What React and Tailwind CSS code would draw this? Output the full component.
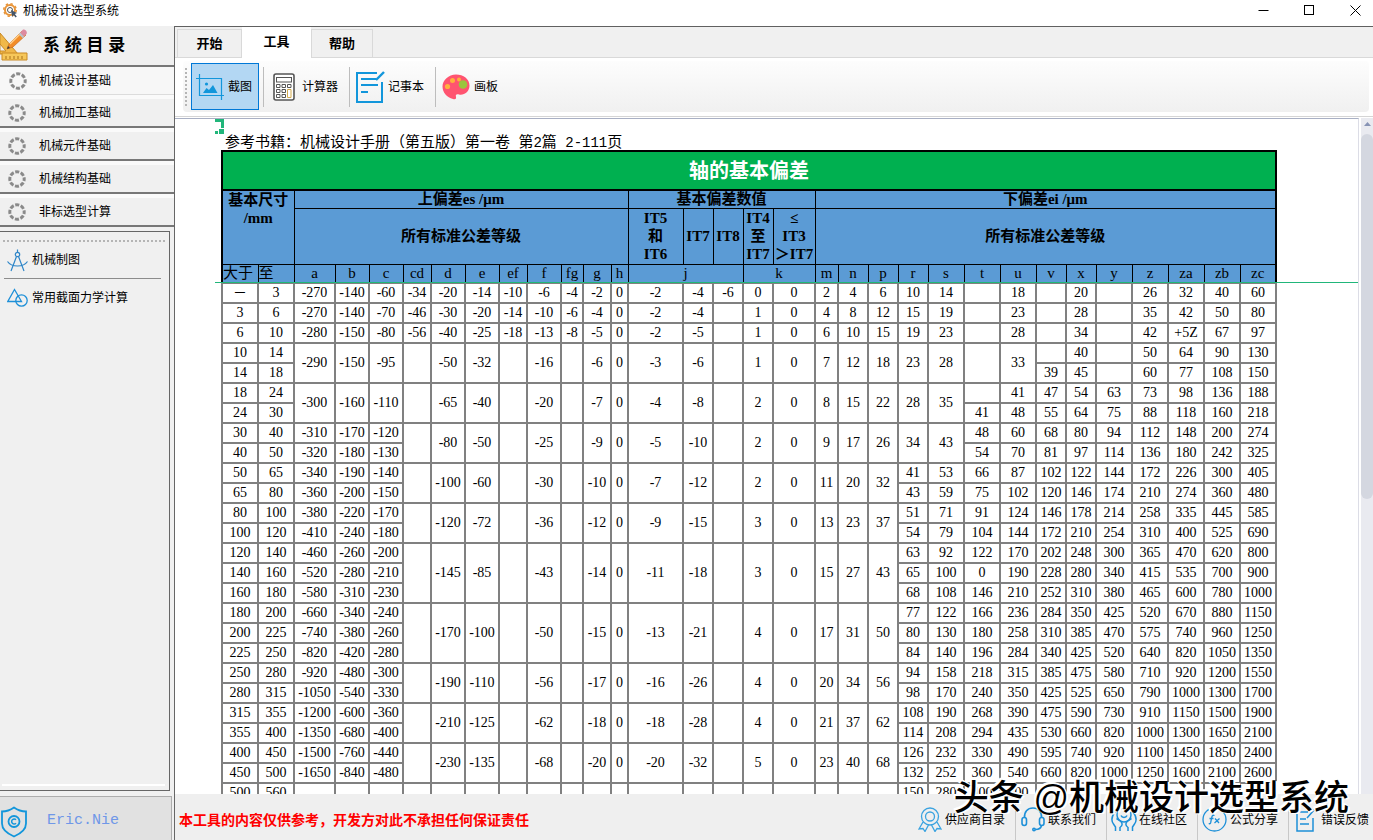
import { useState } from "react";

const COLUMNS = [
    { name: "大于", width: "w-[36px]" },
    { name: "至", width: "w-[36px]" },
    { name: "a", width: "w-[41px]" },
    { name: "b", width: "w-[34px]" },
    { name: "c", width: "w-[34px]" },
    { name: "cd", width: "w-[28px]" },
    { name: "d", width: "w-[34px]" },
    { name: "e", width: "w-[34px]" },
    { name: "ef", width: "w-[28px]" },
    { name: "f", width: "w-[34px]" },
    { name: "fg", width: "w-[22px]" },
    { name: "g", width: "w-[28px]" },
    { name: "h", width: "w-[17px]" },
    { name: "j", width: "w-[55px]", span: 3 },
    { width: "w-[30px]" },
    { width: "w-[30px]" },
    { name: "k", width: "w-[30px]", span: 2 },
    { width: "w-[42px]" },
    { name: "m", width: "w-[23px]" },
    { name: "n", width: "w-[30px]" },
    { name: "p", width: "w-[30px]" },
    { name: "r", width: "w-[30px]" },
    { name: "s", width: "w-[36px]" },
    { name: "t", width: "w-[36px]" },
    { name: "u", width: "w-[36px]" },
    { name: "v", width: "w-[30px]" },
    { name: "x", width: "w-[30px]" },
    { name: "y", width: "w-[36px]" },
    { name: "z", width: "w-[36px]" },
    { name: "za", width: "w-[36px]" },
    { name: "zb", width: "w-[36px]" },
    { name: "zc", width: "w-[36px]" },
];

// "^" joins the cell with the one above it
const ROWS = [
    "─,3,-270,-140,-60,-34,-20,-14,-10,-6,-4,-2,0,-2,-4,-6,0,0,2,4,6,10,14,,18,,20,,26,32,40,60",
    "3,6,-270,-140,-70,-46,-30,-20,-14,-10,-6,-4,0,-2,-4,,1,0,4,8,12,15,19,,23,,28,,35,42,50,80",
    "6,10,-280,-150,-80,-56,-40,-25,-18,-13,-8,-5,0,-2,-5,,1,0,6,10,15,19,23,,28,,34,,42,+5Z,67,97",
    "10,14,-290,-150,-95,,-50,-32,,-16,,-6,0,-3,-6,,1,0,7,12,18,23,28,,33,,40,,50,64,90,130",
    "14,18,^,^,^,^,^,^,^,^,^,^,^,^,^,^,^,^,^,^,^,^,^,^,^,39,45,,60,77,108,150",
    "18,24,-300,-160,-110,,-65,-40,,-20,,-7,0,-4,-8,,2,0,8,15,22,28,35,,41,47,54,63,73,98,136,188",
    "24,30,^,^,^,^,^,^,^,^,^,^,^,^,^,^,^,^,^,^,^,^,^,41,48,55,64,75,88,118,160,218",
    "30,40,-310,-170,-120,,-80,-50,,-25,,-9,0,-5,-10,,2,0,9,17,26,34,43,48,60,68,80,94,112,148,200,274",
    "40,50,-320,-180,-130,^,^,^,^,^,^,^,^,^,^,^,^,^,^,^,^,^,^,54,70,81,97,114,136,180,242,325",
    "50,65,-340,-190,-140,,-100,-60,,-30,,-10,0,-7,-12,,2,0,11,20,32,41,53,66,87,102,122,144,172,226,300,405",
    "65,80,-360,-200,-150,^,^,^,^,^,^,^,^,^,^,^,^,^,^,^,^,43,59,75,102,120,146,174,210,274,360,480",
    "80,100,-380,-220,-170,,-120,-72,,-36,,-12,0,-9,-15,,3,0,13,23,37,51,71,91,124,146,178,214,258,335,445,585",
    "100,120,-410,-240,-180,^,^,^,^,^,^,^,^,^,^,^,^,^,^,^,^,54,79,104,144,172,210,254,310,400,525,690",
    "120,140,-460,-260,-200,,-145,-85,,-43,,-14,0,-11,-18,,3,0,15,27,43,63,92,122,170,202,248,300,365,470,620,800",
    "140,160,-520,-280,-210,^,^,^,^,^,^,^,^,^,^,^,^,^,^,^,^,65,100,0,190,228,280,340,415,535,700,900",
    "160,180,-580,-310,-230,^,^,^,^,^,^,^,^,^,^,^,^,^,^,^,^,68,108,146,210,252,310,380,465,600,780,1000",
    "180,200,-660,-340,-240,,-170,-100,,-50,,-15,0,-13,-21,,4,0,17,31,50,77,122,166,236,284,350,425,520,670,880,1150",
    "200,225,-740,-380,-260,^,^,^,^,^,^,^,^,^,^,^,^,^,^,^,^,80,130,180,258,310,385,470,575,740,960,1250",
    "225,250,-820,-420,-280,^,^,^,^,^,^,^,^,^,^,^,^,^,^,^,^,84,140,196,284,340,425,520,640,820,1050,1350",
    "250,280,-920,-480,-300,,-190,-110,,-56,,-17,0,-16,-26,,4,0,20,34,56,94,158,218,315,385,475,580,710,920,1200,1550",
    "280,315,-1050,-540,-330,^,^,^,^,^,^,^,^,^,^,^,^,^,^,^,^,98,170,240,350,425,525,650,790,1000,1300,1700",
    "315,355,-1200,-600,-360,,-210,-125,,-62,,-18,0,-18,-28,,4,0,21,37,62,108,190,268,390,475,590,730,910,1150,1500,1900",
    "355,400,-1350,-680,-400,^,^,^,^,^,^,^,^,^,^,^,^,^,^,^,^,114,208,294,435,530,660,820,1000,1300,1650,2100",
    "400,450,-1500,-760,-440,,-230,-135,,-68,,-20,0,-20,-32,,5,0,23,40,68,126,232,330,490,595,740,920,1100,1450,1850,2400",
    "450,500,-1650,-840,-480,^,^,^,^,^,^,^,^,^,^,^,^,^,^,^,^,132,252,360,540,660,820,1000,1250,1600,2100,2600",
    "500,560,,,,,,,,,,,,,,,,,,,,150,280,400,600,,,,,,,",
].map((row) => row.split(","));

const CHAPTERS = [
    "机械设计基础",
    "机械加工基础",
    "机械元件基础",
    "机械结构基础",
    "非标选型计算",
];

const TABS = ["开始", "工具", "帮助"];

function rowSpan(row, col) {
    let span = 1;
    while (ROWS[row + span] && ROWS[row + span][col] === "^") span++;
    return span;
}

function AppIcon() {
    return (
        <svg width="16" height="16" viewBox="0 0 16 16" fill="none">
            <circle cx="7" cy="7" r="5" stroke="#e8953a" strokeWidth="2" />
            <circle cx="7" cy="7" r="6.3" stroke="#e8953a" strokeWidth="1.4" strokeDasharray="2.4 2.5" />
            <circle cx="7" cy="7" r="2.5" stroke="#555" />
            <path d="M8 7l6 3-2.2 1 2 2.6-1.2 1-2-2.6-1.4 2z" fill="#44566b" />
        </svg>
    );
}

function DrawingTools() {
    return (
        <svg width="28" height="34" viewBox="0 0 28 34">
            <path d="M0 4L18 25H0z" fill="#f0b84a" stroke="#c98a25" />
            <path d="M0 15l6 7H0z" fill="#f0f0f0" stroke="#c98a25" />
            <path d="M2 24h25v7H2z" fill="#f6c75a" stroke="#c98a25" />
            <path d="M6 27v3M10 27v3M14 27v3M18 27v3M22 27v3" stroke="#a8701a" />
            <path d="M7 20l2-5 13-13 4 4-13 12z" fill="#f28c28" stroke="#c0621a" strokeWidth="0.6" />
            <path d="M10 15L21 4" stroke="#ffd08a" strokeWidth="1.4" />
            <path d="M20 4l2.500-3c2-1.500 5.500 1.500 4 4l-2.500 2.500z" fill="#dd8aa0" />
            <path d="M19.500 4.500l4 4" stroke="#b8c4d0" strokeWidth="2" />
            <path d="M7 20l1-3 2 2z" fill="#3d3d3d" />
        </svg>
    );
}

function Ring() {
    return (
        <svg width="18" height="18" viewBox="0 0 18 18" fill="none">
            <circle cx="9" cy="9" r="7.200" stroke="#8a8a8a" strokeWidth="3" strokeDasharray="4.100 1.555" strokeDashoffset="2.050" />
        </svg>
    );
}

function CompassIcon() {
    return (
        <svg width="21" height="23" viewBox="0 0 21 23" fill="none" stroke="#2f86c8" strokeWidth="1.200">
            <path d="M10.500 0.500v3M9.500 7.500L4 22M11.500 7.500L17 22" />
            <circle cx="10.500" cy="5.500" r="2.200" />
            <path d="M0.500 12.500c4 6 16 6 20 0" />
        </svg>
    );
}

function ShapesIcon() {
    return (
        <svg width="21" height="20" viewBox="0 0 21 20" fill="none" stroke="#1e90d8" strokeWidth="1.300">
            <path d="M7.500 1.500L14.500 13.500H0.800z" />
            <circle cx="14.500" cy="12.500" r="5.700" />
        </svg>
    );
}

function CropIcon() {
    return (
        <svg width="28" height="26" viewBox="0 0 28 26" fill="none" stroke="#1296db">
            <path d="M3.500 0v21.500H28M0 4.500h25.500V26" strokeWidth="1.200" />
            <circle cx="10.500" cy="10" r="1.600" fill="#1296db" stroke="none" />
            <path d="M7 19l3.500-5 2.500 2 4-5 4.500 8z" fill="#1296db" stroke="none" />
        </svg>
    );
}

function CalculatorIcon() {
    return (
        <svg width="22" height="28" viewBox="0 0 22 28" fill="#fff" stroke="#555">
            <rect x="1" y="1" width="20" height="26" rx="2" strokeWidth="1.600" />
            <rect x="3.500" y="4.500" width="15" height="4.500" />
            <path d="M3.500 11.500h3.500v3H3.500zM9 11.500h3.500v3H9zM14.500 11.500h3.500v3h-3.500zM3.500 16.500h3.500v3H3.500zM9 16.500h3.500v3H9zM3.500 21.500h3.500v3H3.500zM9 21.500h3.500v3H9z" />
            <path d="M14.500 16.500h3.500v8h-3.500z" stroke="#d3ab4e" />
        </svg>
    );
}

function NoteIcon() {
    return (
        <svg width="29" height="32" viewBox="0 0 29 32" fill="none" stroke="#1296db" strokeWidth="2">
            <path d="M21 2H1v29h25V11" />
            <path d="M5 8h15M5 14h17M5 21h7" strokeWidth="1.800" />
            <path d="M20 9l8-8" strokeWidth="2.400" />
        </svg>
    );
}

function PaletteIcon() {
    return (
        <svg width="28" height="26" viewBox="0 0 28 26">
            <path d="M14 0.500c7.500 0 13.500 4.500 13.500 11S22 21.500 17 20.500c-3-.6-3.500.5-3 2.500.4 1.800-.8 2.800-3 2C5 23.500.5 18.500.5 12.500S6.500.5 14 .5z" fill="#ff5470" />
            <circle cx="5.500" cy="12.500" r="2.600" fill="#ffb13d" />
            <circle cx="10.500" cy="6.500" r="2.500" fill="#ffb13d" />
            <circle cx="17" cy="5.500" r="2" fill="#ffb13d" />
            <circle cx="21" cy="10.500" r="4.300" fill="#9bc53d" />
        </svg>
    );
}

function ShieldIcon() {
    return (
        <svg width="28" height="32" viewBox="0 0 28 32" fill="none" stroke="#1296db" strokeWidth="1.800">
            <path d="M14 1.500c3.500 2.500 7.500 4 12 4v12c0 6-5 10-12 13C7 27.500 2 23.500 2 17.500v-12c4.500 0 8.500-1.500 12-4z" />
            <circle cx="14" cy="15.500" r="5.500" />
            <path d="M16 13.800a2.500 2.500 0 1 0 0 3.400" strokeWidth="1.500" />
        </svg>
    );
}

function MedalIcon() {
    return (
        <svg width="24" height="25" viewBox="0 0 24 25" fill="none" stroke="#3ba3e0" strokeWidth="1.300">
            <circle cx="12" cy="9.500" r="8.500" />
            <circle cx="12" cy="9.500" r="4.500" />
            <path d="M5 15L1 22l4-.5 2 3 3.500-6.500M19 15l4 7-4-.5-2 3-3.500-6.500" />
        </svg>
    );
}

function HeadsetIcon() {
    return (
        <svg width="24" height="25" viewBox="0 0 24 25" fill="none" stroke="#1e90d8" strokeWidth="1.600">
            <path d="M3.500 11C3 5 6.500 1 12 1s9 4 8.500 10" />
            <rect x="1" y="10.500" width="4.500" height="8" rx="2.200" />
            <rect x="18.500" y="10.500" width="4.500" height="8" rx="2.200" />
            <path d="M20.500 18.500c-.5 2.500-3 4-6 4" />
            <circle cx="13" cy="22.500" r="1.200" />
        </svg>
    );
}

function HandsIcon() {
    return (
        <svg width="26" height="25" viewBox="0 0 26 25" fill="none" stroke="#1e90d8" strokeWidth="1.500">
            <circle cx="13" cy="8" r="7" />
            <path d="M10 8.500c1 2.500 5 2.500 6 0" />
            <path d="M4 4.500C1 9 0 14 2.500 17l2 3v4M9 24v-3.500c3-2 2.500-4.500.5-6.500l-4-2.500M22 4.500c3 4.500 4 9.500 1.500 12.500l-2 3v4M17 24v-3.500c-3-2-2.500-4.500-.5-6.500l4-2.500" />
        </svg>
    );
}

function FormulaIcon() {
    return (
        <svg width="25" height="25" viewBox="0 0 25 25" fill="none" stroke="#1e90d8" strokeWidth="1.300">
            <circle cx="12.500" cy="12.500" r="11.500" />
            <path d="M12.500 8.500c-2-.8-2.600.5-3 3l-.8 4c-.3 1.200-1 1.500-2 1M7.500 11.500h4M13 11.500l4 4.500M17.500 11.500L12.500 16" />
        </svg>
    );
}

function FeedbackIcon() {
    return (
        <svg width="20" height="24" viewBox="0 0 20 24" fill="none" stroke="#1e90d8" strokeWidth="1.500">
            <path d="M12 4H1v19h16V10" />
            <path d="M4 11h6M4 16h9M11 10l7.500-8.500" />
        </svg>
    );
}

const TOOLS = [
    { name: "截图", Icon: CropIcon },
    { name: "计算器", Icon: CalculatorIcon },
    { name: "记事本", Icon: NoteIcon },
    { name: "画板", Icon: PaletteIcon },
];

const LINKS = [
    { name: "供应商目录", Icon: MedalIcon },
    { name: "联系我们", Icon: HeadsetIcon },
    { name: "在线社区", Icon: HandsIcon },
    { name: "公式分享", Icon: FormulaIcon },
    { name: "错误反馈", Icon: FeedbackIcon },
];

function TitleBar() {
    return (
        <header className="flex h-[26px] shrink-0 items-center justify-between bg-white pl-[3px] pr-[12px] pb-[5px]">
            <div className="flex items-center gap-1">
                <AppIcon />
                <h1 className="text-xs">机械设计选型系统</h1>
            </div>
            <div className="flex items-center gap-[35px]">
                <button aria-label="最小化" className="size-[11px]">
                    <svg width="11" height="11" viewBox="0 0 11 11" stroke="#000">
                        <path d="M0.500 5.500h10" />
                    </svg>
                </button>
                <button aria-label="最大化" className="size-[11px]">
                    <svg width="11" height="11" viewBox="0 0 11 11" fill="none" stroke="#000">
                        <rect x="0.500" y="0.500" width="9" height="9" />
                    </svg>
                </button>
                <button aria-label="关闭" className="size-[11px]">
                    <svg width="11" height="11" viewBox="0 0 11 11" stroke="#000">
                        <path d="M0.500 0.500l10 10M10.500 0.500l-10 10" />
                    </svg>
                </button>
            </div>
        </header>
    );
}

function Sidebar() {
    return (
        <aside className="flex w-[175px] shrink-0 flex-col border-r border-[#666] bg-[#f0f0f0]">
            <div className="flex h-[41px] shrink-0 items-center gap-[15px] border-b-2 border-[#777]">
                <DrawingTools />
                <h2 className="text-[17px] font-bold">系 统 目 录</h2>
            </div>
            <nav className="flex shrink-0 flex-col text-xs">
                {CHAPTERS.map((chapter, i) => (
                    <button
                        key={chapter}
                        className={
                            i === 0
                                ? "flex h-[28px] items-center gap-[12px] border-b border-[#dcdcdc] bg-[#f7f7f7] pl-[9px]"
                                : "flex h-[33px] items-center gap-[13px] border-t-4 border-b-2 border-t-[#fafafa] border-b-[#777] pt-px pl-2"
                        }
                    >
                        <Ring />
                        <span>{chapter}</span>
                    </button>
                ))}
            </nav>
            <div className="mt-1 mr-1 flex min-h-0 flex-1 flex-col border-t border-r border-b border-[#666] pb-1 text-xs">
                <div className="mt-2 mr-1 ml-[3px] shrink-0 border-t-2 border-dotted border-[#b5b5b5]" />
                <button className="mr-2 ml-1 flex h-[37px] items-center gap-1 border-b border-[#8c8c8c] pl-[3px]">
                    <CompassIcon />
                    <span>机械制图</span>
                </button>
                <button className="mr-2 ml-1 flex h-[37px] items-center gap-1 pl-[3px]">
                    <ShapesIcon />
                    <span>常用截面力学计算</span>
                </button>
                <div className="mt-auto mr-1 ml-[2px] h-[2px] bg-white" />
            </div>
            <button className="mt-[5px] mr-[2px] flex h-[44px] shrink-0 items-center gap-[19px] border-t border-r border-[#adadad] bg-[#e1e1e1] pt-[6px] text-left">
                <ShieldIcon />
                <span className="font-['Liberation_Mono',monospace] text-[15px] text-[#6f97e8]">Eric.Nie</span>
            </button>
        </aside>
    );
}

function Ribbon() {
    const [active, setActive] = useState("工具");

    return (
        <div className="shrink-0">
            <div className="flex h-[32px] items-end border-t border-[#606060] bg-[#f0f0f0] shadow-[inset_0_-1px_0_#d9d9d9]">
                <div role="tablist" className="flex h-full items-end pl-[2px] text-[13px] font-bold">
                    {TABS.map((tab) => (
                        <button
                            key={tab}
                            role="tab"
                            aria-selected={tab === active}
                            onClick={() => setActive(tab)}
                            className={
                                tab === active
                                    ? "h-full w-[69px] bg-white pb-[2px]"
                                    : "h-[29px] w-[65px] border border-[#d9d9d9] bg-[#f0f0f0] last:w-[62px]"
                            }
                        >
                            {tab}
                        </button>
                    ))}
                </div>
            </div>
            <div className="border-b border-[#d5d5d5] bg-white pt-[3px] pr-1 pb-1 pl-2">
                <div className="flex h-[51px] items-center rounded bg-linear-to-b from-[#fdfdfd] to-[#f0f0f0] pl-[2px] text-xs">
                    <div className="mr-[4px] h-[38px] border-l-2 border-dotted border-[#b5b5b5]" />
                    {TOOLS.map(({ name, Icon }, i) => (
                        <div key={name} className="flex items-center">
                            {i > 0 && <div className="mx-[4px] h-[40px] w-px bg-[#bdbdbd]" />}
                            <button
                                className={
                                    i === 0
                                        ? "flex h-[47px] w-[68px] items-center gap-[2px] border border-[#0078d7] bg-[#b3d7f3] pl-[2px]"
                                        : "flex h-[47px] items-center gap-[2px] pr-[7px]"
                                }
                            >
                                <span className="flex w-[32px] justify-center">
                                    <Icon />
                                </span>
                                <span>{name}</span>
                            </button>
                        </div>
                    ))}
                </div>
            </div>
        </div>
    );
}

function DeviationTable() {
    return (
        <table className="w-[1056px] table-fixed border-collapse text-center font-['Liberation_Serif','Noto_Sans_CJK_SC',serif] text-sm">
            <colgroup>
                {COLUMNS.map((col, i) => (
                    <col key={i} className={col.width} />
                ))}
            </colgroup>
            <thead className="border-2 border-black bg-[#5b9bd5] text-[15px] leading-[18px]">
                <tr>
                    <th colSpan={32} className="h-[39px] border-2 border-black bg-[#00b050] text-xl text-white">
                        轴的基本偏差
                    </th>
                </tr>
                <tr>
                    <th colSpan={2} rowSpan={2} className="border border-black align-top">
                        基本尺寸
                        <br />
                        /mm
                    </th>
                    <th colSpan={11} className="h-[18px] border border-black leading-4">上偏差es /μm</th>
                    <th colSpan={5} className="border border-black leading-4">基本偏差数值</th>
                    <th colSpan={14} className="border border-black leading-4">下偏差ei /μm</th>
                </tr>
                <tr>
                    <th colSpan={11} className="h-[56px] border border-black">所有标准公差等级</th>
                    <th className="border border-black">
                        IT5
                        <br />
                        和
                        <br />
                        IT6
                    </th>
                    <th className="border border-black">IT7</th>
                    <th className="border border-black">IT8</th>
                    <th className="border border-black">
                        IT4
                        <br />
                        至
                        <br />
                        IT7
                    </th>
                    <th className="border border-black">
                        ≤
                        <br />
                        IT3
                        <br />
                        ＞IT7
                    </th>
                    <th colSpan={14} className="border border-black">所有标准公差等级</th>
                </tr>
                <tr>
                    {COLUMNS.filter((col) => col.name).map((col) => (
                        <th
                            key={col.name}
                            colSpan={col.span}
                            className="h-[19px] border border-black font-normal whitespace-nowrap leading-4 first:text-left nth-2:text-left"
                        >
                            {col.name}
                        </th>
                    ))}
                </tr>
            </thead>
            <tbody>
                {ROWS.map((row, r) => (
                    <tr key={r}>
                        {row.map(
                            (cell, c) =>
                                cell !== "^" && (
                                    <td
                                        key={c}
                                        rowSpan={rowSpan(r, c)}
                                        className="h-[20px] border-2 border-[#808080] leading-4 whitespace-nowrap"
                                    >
                                        {cell}
                                    </td>
                                )
                        )}
                    </tr>
                ))}
            </tbody>
        </table>
    );
}

function Sheet() {
    return (
        <div className="flex min-h-0 flex-1 pt-px">
            <div className="relative min-w-0 flex-1 overflow-hidden border-t border-r border-t-[#a9b0c4] border-r-[#dcdde6] bg-white pt-3 pl-[46px]">
                <svg className="absolute top-0 left-[40px]" width="10" height="15" viewBox="0 0 10 15" fill="#21b67a">
                    <path d="M0 0h9v9H6V3H0zM0 12h3v3H0zM4 10h5v5H4z" />
                </svg>
                <p className="h-[19px] pl-1 text-[15px] leading-[21px] whitespace-nowrap">
                    参考书籍：机械设计手册（第五版）第一卷
                    <span className="font-['Liberation_Mono',monospace] text-sm leading-none"> </span>第
                    <span className="font-['Liberation_Mono',monospace] text-sm leading-none">2</span>篇
                    <span className="font-['Liberation_Mono',monospace] text-sm leading-none"> 2-111</span>页
                </p>
                <DeviationTable />
                <div className="absolute top-[163px] right-0 left-[40px] h-px bg-[#21b67a]" />
            </div>
            <div className="ml-[2px] flex w-[12px] flex-col items-center bg-[#e9eaf0]">
                <svg className="my-1" width="7" height="4" viewBox="0 0 7 4" fill="#8793b5">
                    <path d="M3.500 0L7 4H0z" />
                </svg>
                <div className="mt-1 h-[54%] w-full rounded-md bg-[#d4d7e0]" />
            </div>
        </div>
    );
}

function StatusBar() {
    return (
        <footer className="relative flex h-[46px] shrink-0 items-center justify-between bg-[#efefef] pt-[5px] pr-[4px] pl-1">
            <p className="text-sm font-bold text-[#f00]">
                本工具的内容仅供参考，开发方对此不承担任何保证责任
            </p>
            <div className="flex h-full items-center text-xs">
                {LINKS.map(({ name, Icon }, i) => (
                    <div key={name} className="flex h-full items-center">
                        {i > 0 && <div className="mr-[4px] ml-[10px] h-full w-px bg-[#c8c8c8]" />}
                        <a href="#" className="flex items-center gap-[2px]">
                            <span className="flex w-[26px] justify-center">
                                <Icon />
                            </span>
                            <span>{name}</span>
                        </a>
                    </div>
                ))}
            </div>
            <div className="pointer-events-none absolute right-[24px] bottom-[22px] text-[35px] leading-[40px] font-medium whitespace-nowrap text-black [text-shadow:-2px_-2px_0_#fff,-1px_-2px_0_#fff,-2px_-1px_0_#fff,-1px_-1px_0_#fff,1px_1px_0_#fff,2px_1px_0_#fff]">
                头条 @机械设计选型系统
            </div>
        </footer>
    );
}

export default function App() {
    return (
        <div className="flex h-screen flex-col overflow-hidden bg-white font-['Liberation_Sans','Noto_Sans_CJK_SC',sans-serif] text-black">
            <TitleBar />
            <div className="flex min-h-0 flex-1">
                <Sidebar />
                <main className="flex min-w-0 flex-1 flex-col">
                    <Ribbon />
                    <Sheet />
                    <StatusBar />
                </main>
            </div>
        </div>
    );
}
